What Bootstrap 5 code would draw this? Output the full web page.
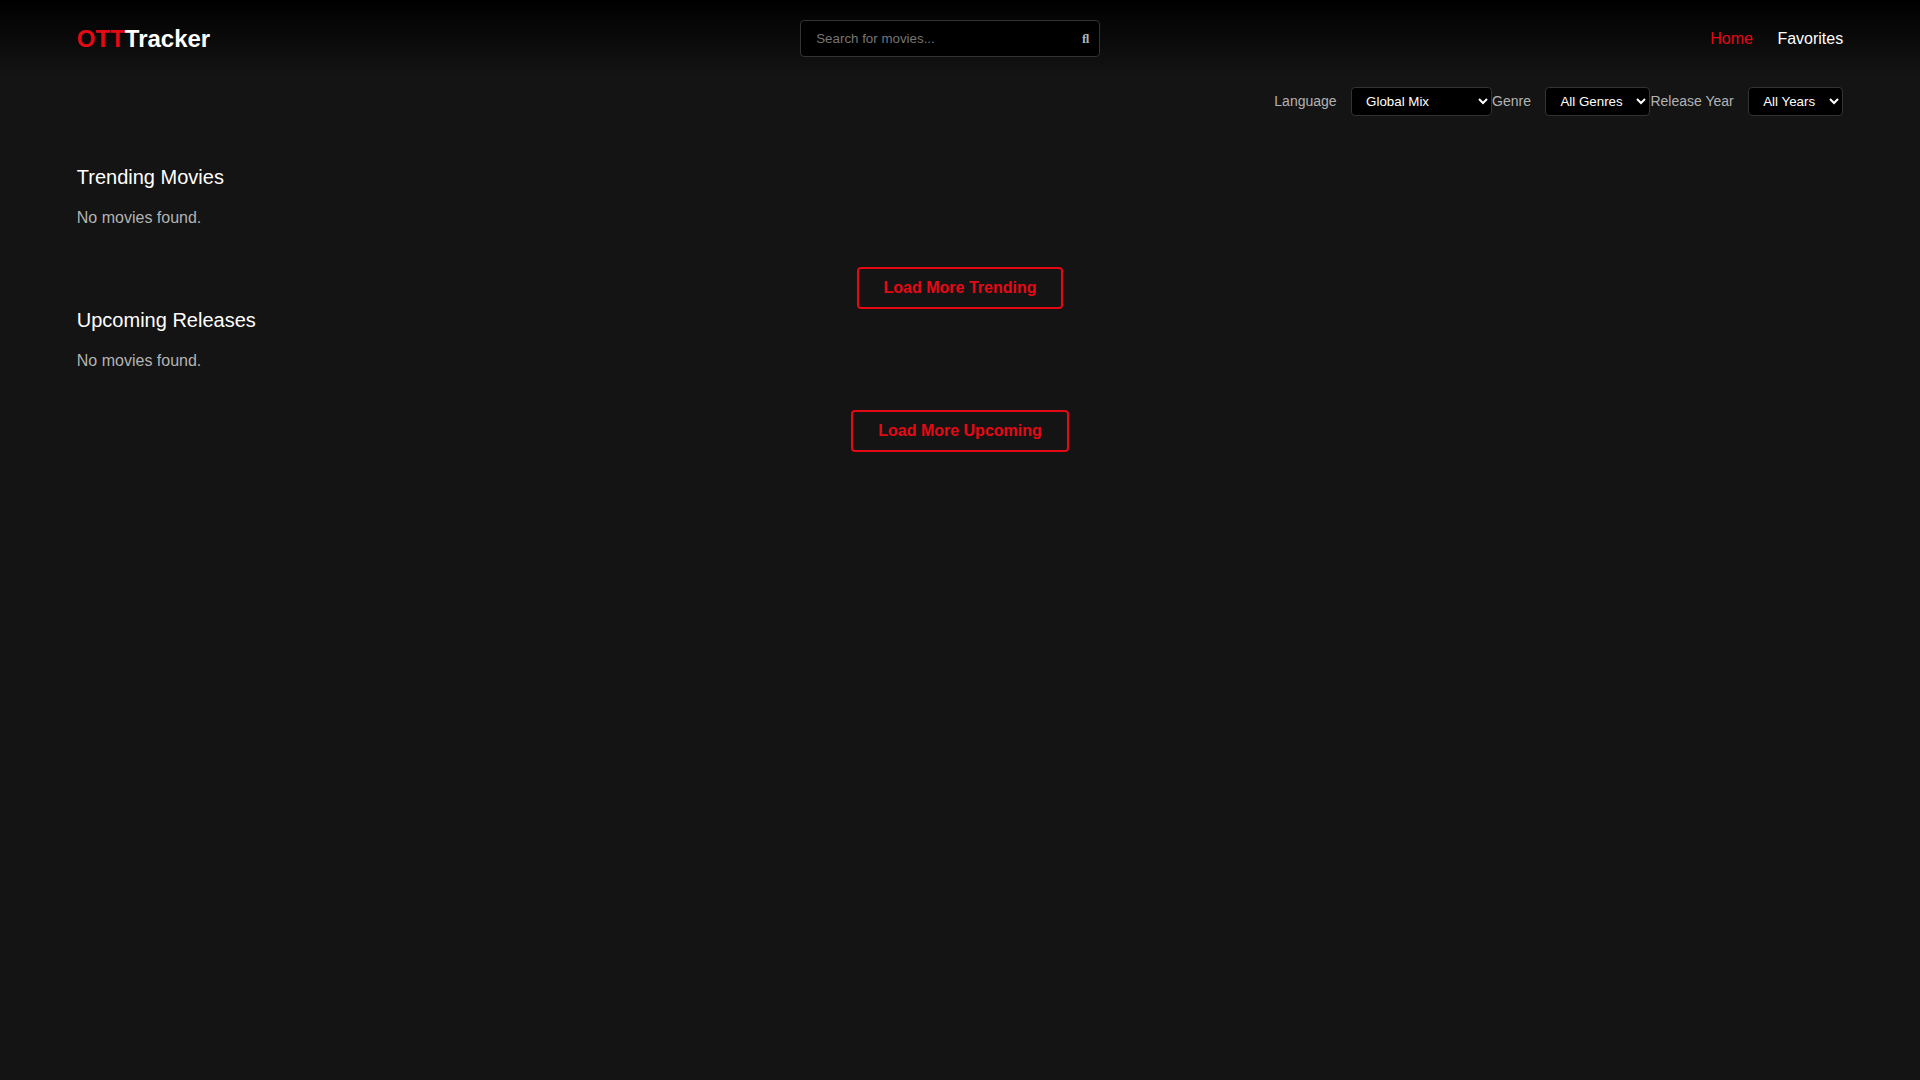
<!DOCTYPE html>
<html lang="en">
<head>
<meta charset="utf-8">
<meta name="viewport" content="width=device-width, initial-scale=1">
<title>OTTTracker</title>
<link href="https://cdn.jsdelivr.net/npm/bootstrap@5.3.0/dist/css/bootstrap.min.css" rel="stylesheet">
<style>
  body {
    background: #141414;
    color: #fff;
    font-family: "Liberation Sans", Arial, sans-serif;
    font-size: 16px;
    line-height: 18px;
  }
  a { text-decoration: none; }
  .page-gutter { padding-left: 4%; padding-right: 4%; }
  .site-header {
    padding-top: 20px;
    padding-bottom: 20px;
    background: linear-gradient(to bottom, #000, #141414);
  }
  .brand { font-size: 24px; line-height: 27px; color: #fff; }
  .brand-accent, .site-nav .active { color: #e50914; }
  .site-nav a { color: #fff; margin-left: 20px; }
  .site-nav a.active { color: #e50914; }
  .search-box { width: 300px; }
  .search-box input {
    padding: 10px 15px;
    border: 1px solid #333;
    border-radius: 4px;
    background: #000;
    color: #fff;
    font-size: smaller;
    line-height: 15px;
  }
  .search-box input::placeholder { color: #757575; }
  .search-box button {
    right: 11px;
    color: #b3b3b3;
    font: bold 13px/16px "Liberation Serif", serif;
  }
  .filter-bar { padding-top: 10px; padding-bottom: 10px; }
  .filter-bar label { margin-right: 10px; color: #b3b3b3; font-size: 14px; }
  .filter-bar select {
    height: 29px;
    padding: 5px 10px;
    border: 1px solid #333;
    border-radius: 4px;
    background: #000;
    color: #fff;
    font-size: smaller;
  }
  .language-select { width: 141px; }
  .genre-select { width: 105px; }
  .year-select { width: 95px; }
  main { padding-top: 40px; padding-bottom: 40px; }
  .section-title { margin-bottom: 20px; font-size: 20px; line-height: 23px; font-weight: 400; }
  .empty-note { margin-bottom: 40px; color: #b3b3b3; }
  .load-more {
    padding: 10px 25px;
    border: 2px solid #e50914;
    border-radius: 4px;
    background: transparent;
    color: #e50914;
    font-weight: 700;
    line-height: 18px;
  }
  .load-more:hover { background: #e50914; color: #fff; }
</style>
</head>
<body>
<header class="site-header page-gutter d-flex justify-content-between align-items-center">
  <a class="brand fw-bold" href="#"><span class="brand-accent">OTT</span>Tracker</a>
  <form class="search-box position-relative" role="search">
    <input class="d-block w-100" type="text" placeholder="Search for movies..." aria-label="Search for movies">
    <button class="position-absolute top-50 translate-middle-y border-0 bg-transparent p-0" type="button" aria-label="Search">&#xFB02;</button>
  </form>
  <nav class="site-nav">
    <a class="active" href="#">Home</a>
    <a href="#">Favorites</a>
  </nav>
</header>
<div class="filter-bar page-gutter d-flex flex-wrap justify-content-end align-items-center">
  <div>
    <label for="language">Language</label>
    <select class="language-select" id="language"><option>Global Mix</option></select>
  </div>
  <div>
    <label for="genre">Genre</label>
    <select class="genre-select" id="genre"><option>All Genres</option></select>
  </div>
  <div>
    <label for="year">Release Year</label>
    <select class="year-select" id="year"><option>All Years</option></select>
  </div>
</div>
<main class="page-gutter">
  <section>
    <h2 class="section-title">Trending Movies</h2>
    <p class="empty-note">No movies found.</p>
    <div class="d-flex justify-content-center"><button class="load-more" type="button">Load More Trending</button></div>
  </section>
  <section>
    <h2 class="section-title">Upcoming Releases</h2>
    <p class="empty-note">No movies found.</p>
    <div class="d-flex justify-content-center"><button class="load-more" type="button">Load More Upcoming</button></div>
  </section>
</main>
<script src="https://cdn.jsdelivr.net/npm/bootstrap@5.3.0/dist/js/bootstrap.bundle.min.js"></script>
</body>
</html>
